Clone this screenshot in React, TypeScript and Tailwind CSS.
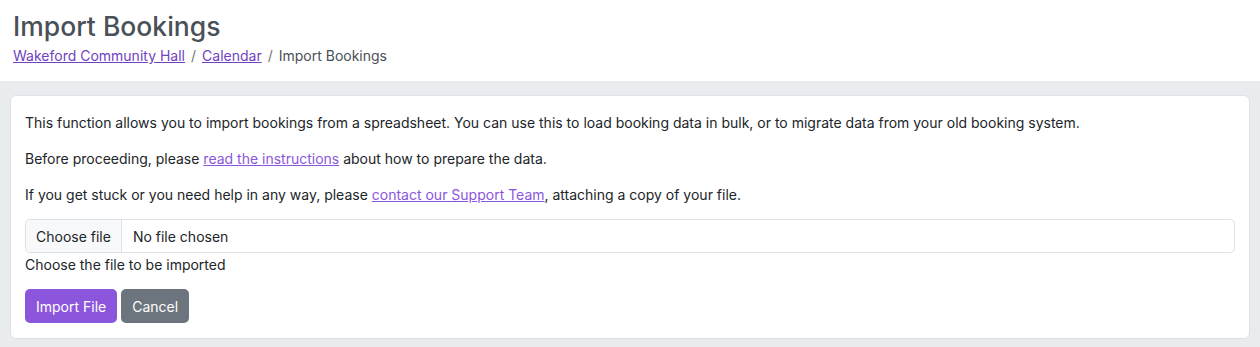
export default function App() {
  return (
    <div className="min-h-[347px] bg-[#e9ecef] font-['Inter',sans-serif] text-[#212529]">
      <header className="h-[81px] bg-white pl-[13px] pt-[9px]">
        <h1 className="text-[26.5px] leading-[34px] font-medium text-[#495057]">Import Bookings</h1>
        <nav className="mt-[2px] flex items-center gap-[6px] text-[14px] leading-[21px] text-[#495057]">
          <a href="#" className="text-[#6f42c1] underline">Wakeford Community Hall</a>
          <span className="text-[#6c757d]">/</span>
          <a href="#" className="text-[#6f42c1] underline">Calendar</a>
          <span className="text-[#6c757d]">/</span>
          <span>Import Bookings</span>
        </nav>
      </header>

      <main className="px-[10px] pt-[14px] pb-[9px]">
        <div className="rounded-[6px] border border-[#dee2e6] bg-white px-[14px] pt-[16px] pb-[15px] text-[14px] leading-[21px]">
          <p className="mb-[15px]">
            This function allows you to import bookings from a spreadsheet. You can use this to load booking data in bulk, or to migrate data from your old booking system.
          </p>
          <p className="mb-[15px]">
            Before proceeding, please{" "}
            <a href="#" className="text-[#8c56dc] underline">read the instructions</a> about how to prepare the data.
          </p>
          <p className="mb-[14px]">
            If you get stuck or you need help in any way, please{" "}
            <a href="#" className="text-[#8c56dc] underline">contact our Support Team</a>, attaching a copy of your file.
          </p>

          <div className="flex h-[34px] items-stretch overflow-hidden rounded-[5px] border border-[#dee2e6]">
            <span className="flex items-center border-r border-[#dee2e6] bg-[#f8f9fa] px-[10px]">Choose file</span>
            <span className="flex items-center px-[11px]">No file chosen</span>
          </div>
          <div className="mt-[1px]">Choose the file to be imported</div>

          <div className="mt-[14px] flex gap-[4px]">
            <button className="h-[34px] rounded-[5px] bg-[#8c56dc] px-[11px] text-white">Import File</button>
            <button className="h-[34px] rounded-[5px] bg-[#6c757d] px-[11px] text-white">Cancel</button>
          </div>
        </div>
      </main>
    </div>
  )
}
